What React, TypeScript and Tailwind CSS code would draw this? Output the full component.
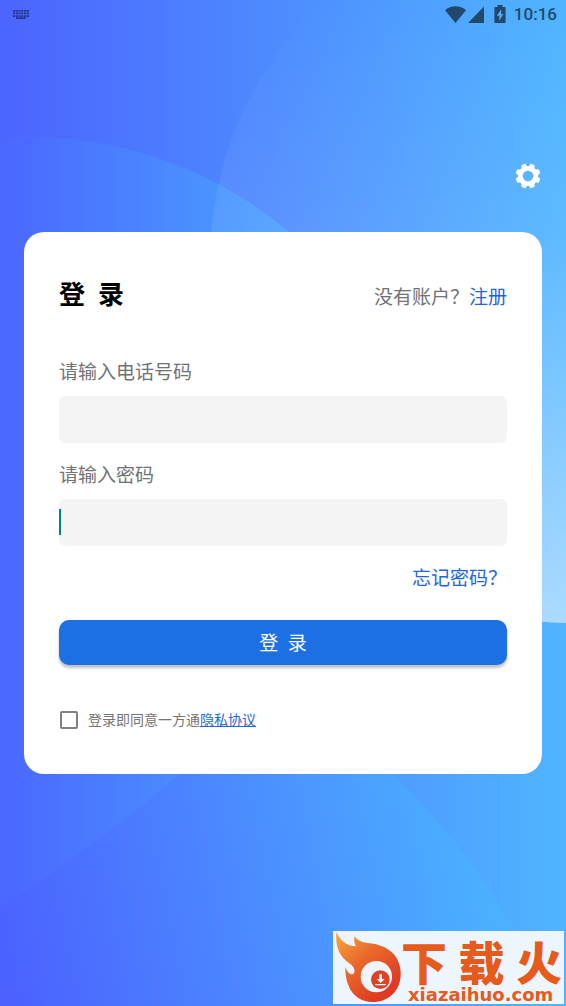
import React from "react";

function Backdrop() {
  return (
    <svg
      className="absolute inset-0 h-full w-full"
      viewBox="0 0 566 1006"
      preserveAspectRatio="none"
      aria-hidden="true"
    >
      <defs>
        <linearGradient id="base" x1="0" y1="0" x2="1" y2="0">
          <stop offset="0" stopColor="#4b64ff" />
          <stop offset="0.5" stopColor="#4d8cff" />
          <stop offset="1" stopColor="#50b5ff" />
        </linearGradient>
        <linearGradient id="left" gradientUnits="userSpaceOnUse" x1="0" y1="0" x2="310" y2="0">
          <stop offset="0" stopColor="#4b67ff" />
          <stop offset="1" stopColor="#4aa6ff" />
        </linearGradient>
        <linearGradient id="bottom" gradientUnits="userSpaceOnUse" x1="0" y1="930" x2="480" y2="830">
          <stop offset="0" stopColor="#4b62ff" />
          <stop offset="1" stopColor="#4bb1ff" />
        </linearGradient>
        <linearGradient id="right" x1="0" y1="0" x2="0" y2="1">
          <stop offset="0.14" stopColor="#fff" stopOpacity="0" />
          <stop offset="0.46" stopColor="#fff" stopOpacity="0.08" />
          <stop offset="1" stopColor="#fff" stopOpacity="0.52" />
        </linearGradient>
      </defs>
      <rect width="566" height="1006" fill="url(#base)" />
      <circle cx="30" cy="537" r="400" fill="url(#left)" />
      <ellipse cx="572" cy="262" rx="362" ry="361" fill="url(#right)" />
      <path
        d="M0 907Q95 846 180 774Q285 680 393 774Q471 851 514 931Q534 968 546 1006H0Z"
        fill="url(#bottom)"
      />
    </svg>
  );
}

function StatusBar() {
  return (
    <header className="flex h-7 items-center justify-between pr-[9px] pl-[13px] text-[#22496c]">
      <svg width="16" height="9" viewBox="0 0 16 9" fill="#26368a" aria-hidden="true">
        {[0, 2.6, 5.2].map((y) => (
          <path
            key={y}
            d={`M0 ${y}h2.4v1.7H0zM3 ${y}h1.8v1.7H3zM5.5 ${y}h2v1.7h-2zM8.2 ${y}h2v1.7h-2zM10.9 ${y}h1.9v1.7h-1.9zM13.5 ${y}H16v1.7h-2.5z`}
          />
        ))}
        <path d="M3 7.3h10V9H3z" />
      </svg>
      <div className="flex items-center">
        <svg width="21" height="17" viewBox="0 0 21 17" fill="currentColor" aria-hidden="true">
          <path d="M10.500 17L0 4.200C2.800 1.700 6.300.3 10.500.3S18.200 1.700 21 4.200z" />
        </svg>
        <svg className="ml-[2px]" width="16" height="17" viewBox="0 0 16 17" fill="currentColor" aria-hidden="true">
          <path d="M16 .5V17H0z" />
        </svg>
        <svg className="ml-[10px]" width="12" height="18" viewBox="0 0 12 18" fill="currentColor" aria-hidden="true">
          <path
            fillRule="evenodd"
            d="M3.500 0h5v2H11q.600 0 .600 1v14q0 1-.600 1H1q-.600 0-.600-1V3q0-1 .600-1h2.500zM7.200 4.300L2.800 10.700H5.300v5L9.400 8.900H7.200z"
          />
        </svg>
        <time className="ml-2 font-['Roboto',sans-serif] text-[17px] leading-7 font-medium">10:16</time>
      </div>
    </header>
  );
}

function Gear() {
  return (
    <svg width="26" height="26" viewBox="-13 -13 26 26" aria-hidden="true">
      <defs>
        <mask id="gear-hole">
          <rect x="-13" y="-13" width="26" height="26" fill="#fff" />
          <circle r="5.300" fill="#000" />
        </mask>
      </defs>
      <g fill="#fff" mask="url(#gear-hole)">
        <circle r="10.100" />
        {[22.5, 67.5, 112.5, 157.5].map((a) => (
          <rect key={a} x="-2.600" y="-12.500" width="5.200" height="25" rx="1.400" transform={`rotate(${a})`} />
        ))}
      </g>
    </svg>
  );
}

function Watermark() {
  return (
    <div className="mt-auto mr-[2px] mb-[2px] flex h-[73px] items-start self-end bg-[#edf6ff] pr-[2px] text-[#e65a1c]">
      <svg width="68" height="73" viewBox="21 21 204 219" aria-hidden="true">
        <defs>
          <linearGradient id="flame" gradientUnits="userSpaceOnUse" x1="35" y1="30" x2="180" y2="200">
            <stop offset="0" stopColor="#f6a63b" />
            <stop offset="0.45" stopColor="#ea6a2b" />
            <stop offset="1" stopColor="#de3b22" />
          </linearGradient>
        </defs>
        <path
          fill="url(#flame)"
          d="M31 24C43 50 62 66 90 67C84 56 83 47 86 37C94 51 111 56 132 58C184 64 221 93 224 143C227 197 190 235 137 234C83 232 57 187 58 129C63 143 72 154 81 150C88 146 87 133 77 123C46 101 27 79 31 24Z"
        />
        <circle cx="151" cy="158" r="47" fill="#edf6ff" />
        <circle cx="163" cy="167" r="28" fill="#df4125" />
        <path fill="#fff" d="M160 151h8v14h8l-12 12-12-12h8zM148 180h31v4h-31z" />
      </svg>
      <div className="flex w-[161px] flex-col">
        <div className="flex justify-between pt-[8px] font-['Noto_Sans_CJK_SC',sans-serif] text-[46px] leading-[42px] font-black">
          <span>下</span>
          <span>载</span>
          <span>火</span>
        </div>
        <span className="pt-[6px] pl-[7px] font-['DejaVu_Sans',sans-serif] text-[18px] leading-[16px] font-bold">
          xiazaihuo.com
        </span>
      </div>
    </div>
  );
}

const field =
  "block h-[47px] w-full rounded-md bg-[#f4f4f4] px-3 text-[19px] text-black caret-[#00897b] outline-none";
const label = "mb-[9px] block text-[19px] leading-7 text-[#6f7276]";

export default function App() {
  return (
    <div className="relative min-h-screen overflow-hidden font-['Roboto','Noto_Sans_CJK_SC',sans-serif]">
      <Backdrop />
      <div className="relative flex min-h-screen flex-col">
        <StatusBar />
        <button type="button" aria-label="设置" className="mt-[135px] mr-[25px] self-end">
          <Gear />
        </button>

        <form
          className="mx-6 mt-[43px] rounded-[20px] bg-white px-[35px] pt-[43px] pb-11"
          onSubmit={(e) => e.preventDefault()}
        >
          <div className="mb-11 flex items-baseline justify-between">
            <h1 className="text-[26px] leading-10 font-bold whitespace-pre text-black">登  录</h1>
            <p className="text-[19px] leading-7 text-[#6f7276]">
              没有账户？
              <a href="#register" className="text-[#2466d8]">注册</a>
            </p>
          </div>

          <label htmlFor="phone" className={label}>请输入电话号码</label>
          <input id="phone" type="tel" className={field} />

          <label htmlFor="password" className={`mt-[19px] ${label}`}>请输入密码</label>
          <div className="relative">
            <input id="password" type="password" className={field} />
            <span className="absolute top-[10px] left-0 h-[26px] w-[2px] bg-[#00897b]" />
          </div>

          <div className="mt-[19px] flex justify-end text-[19px] leading-7">
            <a href="#forgot" className="text-[#2466d8]">忘记密码？</a>
          </div>

          <button
            type="submit"
            className="mt-[27px] block h-[45px] w-full rounded-[10px] bg-[#1d70e3] pt-1 text-[19px] whitespace-pre text-white shadow-[0_3px_3px_rgba(0,0,0,0.25)]"
          >
            登  录
          </button>

          <div className="mt-[45px] flex h-5 items-center text-[14px] leading-5 text-[#757575]">
            <input
              id="agree"
              type="checkbox"
              className="mr-[10px] ml-[1px] h-[18px] w-[18px] appearance-none rounded-[2px] border-2 border-[#808080] checked:bg-[#1d70e3]"
            />
            <label htmlFor="agree">登录即同意一方通</label>
            <a href="#privacy" className="text-[#2466d8] underline">隐私协议</a>
          </div>
        </form>

        <Watermark />
      </div>
    </div>
  );
}
